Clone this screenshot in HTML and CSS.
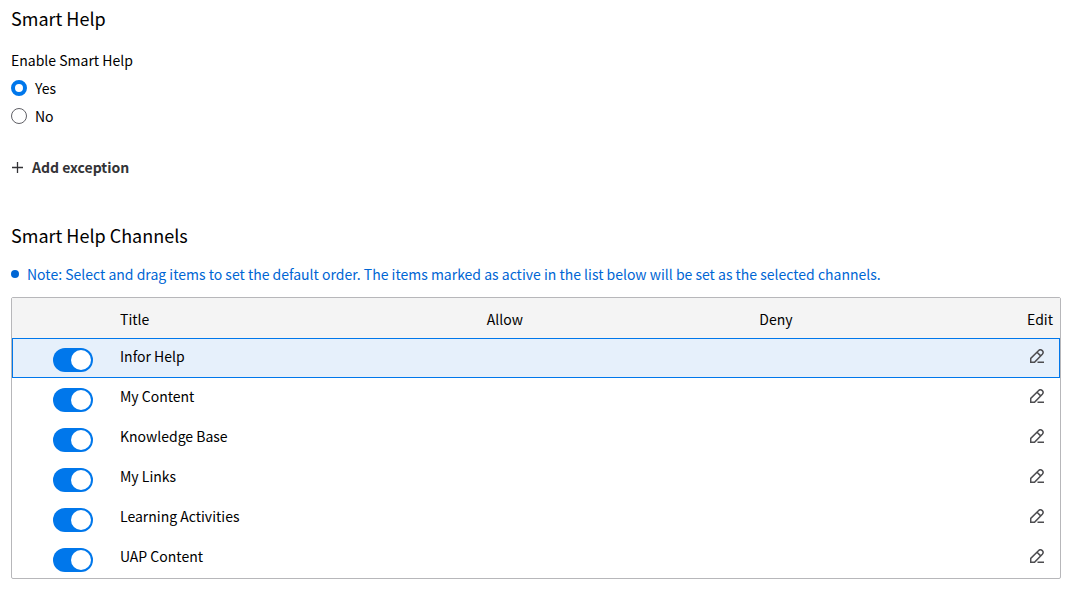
FILE: index.html
```html
<!DOCTYPE html>
<html lang="en">
<head>
<meta charset="UTF-8">
<title>Smart Help</title>
<link rel="stylesheet" href="styles.css">
</head>
<body>
<svg class="sprite" aria-hidden="true">
    <symbol id="pencil" viewBox="0 0 14 14">
        <path d="M.7 13.3V9.400L8.700 1.500c1.100-1 2.500-1 3.600.1s1 2.500 0 3.600L4.500 13.300zM7 3.200l3.700 3.700M7.500 13.300H14"/>
    </symbol>
</svg>
<section class="settings">
    <h2>Smart Help</h2>
    <fieldset class="enable">
        <legend>Enable Smart Help</legend>
        <label class="radio"><input type="radio" name="enable" checked>Yes</label>
        <label class="radio"><input type="radio" name="enable">No</label>
    </fieldset>
    <button type="button" class="add">
        <svg viewBox="0 0 12 12" aria-hidden="true"><path d="M6.500 1v11M1 6.500h11"/></svg>
        Add exception
    </button>
</section>
<section class="channels">
    <h2>Smart Help Channels</h2>
    <p class="note">Note: Select and drag items to set the default order. The items marked as active in the list below will be set as the selected channels.</p>
    <div class="list">
        <table>
            <thead>
                <tr><th class="c-toggle"></th><th class="c-title">Title</th><th class="c-allow">Allow</th><th>Deny</th><th class="c-edit">Edit</th></tr>
            </thead>
            <tbody>
                <tr class="selected">
                    <td class="c-toggle"><input type="checkbox" class="switch" id="ch1" checked></td>
                    <td><label for="ch1">Infor Help</label></td><td></td><td></td>
                    <td class="c-edit"><button type="button" class="edit" aria-label="Edit"><svg><use href="#pencil"/></svg></button></td>
                </tr>
                <tr>
                    <td class="c-toggle"><input type="checkbox" class="switch" id="ch2" checked></td>
                    <td><label for="ch2">My Content</label></td><td></td><td></td>
                    <td class="c-edit"><button type="button" class="edit" aria-label="Edit"><svg><use href="#pencil"/></svg></button></td>
                </tr>
                <tr>
                    <td class="c-toggle"><input type="checkbox" class="switch" id="ch3" checked></td>
                    <td><label for="ch3">Knowledge Base</label></td><td></td><td></td>
                    <td class="c-edit"><button type="button" class="edit" aria-label="Edit"><svg><use href="#pencil"/></svg></button></td>
                </tr>
                <tr>
                    <td class="c-toggle"><input type="checkbox" class="switch" id="ch4" checked></td>
                    <td><label for="ch4">My Links</label></td><td></td><td></td>
                    <td class="c-edit"><button type="button" class="edit" aria-label="Edit"><svg><use href="#pencil"/></svg></button></td>
                </tr>
                <tr>
                    <td class="c-toggle"><input type="checkbox" class="switch" id="ch5" checked></td>
                    <td><label for="ch5">Learning Activities</label></td><td></td><td></td>
                    <td class="c-edit"><button type="button" class="edit" aria-label="Edit"><svg><use href="#pencil"/></svg></button></td>
                </tr>
                <tr>
                    <td class="c-toggle"><input type="checkbox" class="switch" id="ch6" checked></td>
                    <td><label for="ch6">UAP Content</label></td><td></td><td></td>
                    <td class="c-edit"><button type="button" class="edit" aria-label="Edit"><svg><use href="#pencil"/></svg></button></td>
                </tr>
            </tbody>
        </table>
    </div>
</section>
</body>
</html>
```

FILE: styles.css
```css
*{margin: 0;padding: 0;box-sizing: border-box;}
body{padding: 6px 11px;background: #fff;color: #000;font: 14px/24px "Source Sans Pro","Noto Sans CJK SC",sans-serif;}
button,input{font: inherit;}
.sprite{display: none;}
h2{font-size: 18px;font-weight: 400;line-height: 24px;}

.enable{border: 0;margin-top: 18px;}
.enable legend{margin-bottom: 4px;}
.radio{display: flex;align-items: center;gap: 8px;width: max-content;margin-bottom: 4px;}
.radio input{appearance: none;width: 16px;height: 16px;border: 1px solid #606066;border-radius: 50%;background: #fff;}
.radio input:checked{border: 4px solid #0077eb;}

.add{display: flex;align-items: center;gap: 9px;margin-top: 23px;border: 0;background: none;color: #333336;font-weight: 600;}
.add svg{width: 12px;height: 12px;fill: none;stroke: #333336;stroke-width: 1.3;}

.channels{margin-top: 44px;}
.note{display: flex;align-items: center;gap: 8px;margin-top: 15px;color: #0066d4;}
.note::before{content: "";flex: none;width: 8px;height: 8px;border-radius: 50%;background: #0066d4;}

.list{margin-top: 11px;border: 1px solid #b7b7ba;border-radius: 2px;}
table{width: 100%;table-layout: fixed;border-collapse: collapse;}
th,td{height: 40px;padding: 0 8px;text-align: left;vertical-align: middle;font-weight: 400;}
th{padding-top: 2px;background: #f4f4f4;}
td{padding-bottom: 4px;}
.selected{background: #e6f0fb;outline: 1px solid #0077eb;outline-offset: -1px;}
.c-toggle{width: 100px;}
.c-title{width: 35%;}
.c-allow{width: 26%;}
.c-edit{width: 50px;padding-right: 7px;text-align: right;}
td.c-toggle{padding: 4px 0 0 41px;}

.switch{appearance: none;display: block;width: 40px;height: 24px;padding: 2px;border-radius: 12px;background: #0077eb;}
.switch::before{content: "";display: block;width: 20px;height: 20px;border-radius: 50%;background: #fff;}
.switch:checked::before{margin-left: auto;}

.edit{display: block;margin-left: auto;padding: 0 9px;border: 0;background: none;}
.edit svg{display: block;width: 14px;height: 14px;fill: none;stroke: #4d4d50;stroke-width: 1.5;}
```
